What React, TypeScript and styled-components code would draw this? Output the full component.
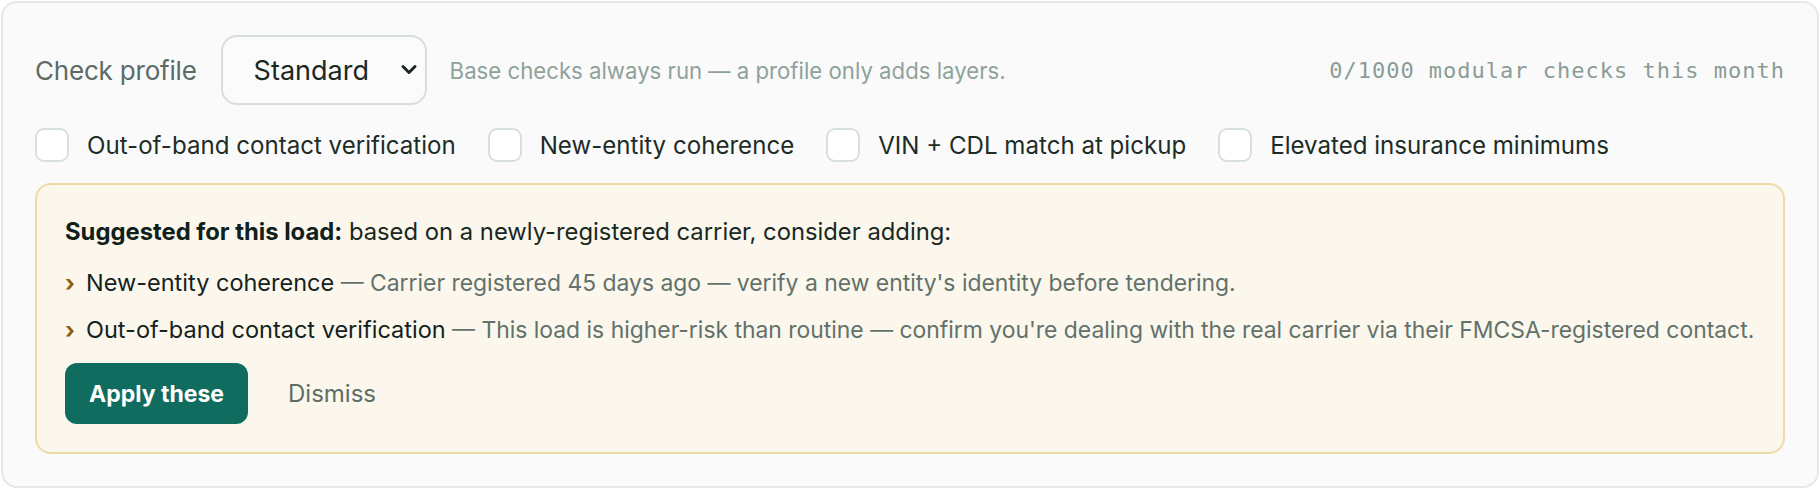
import { useState } from "react"
import styled, { createGlobalStyle } from "styled-components"

const GlobalStyle = createGlobalStyle`
  html, body {
    margin: 0;
    padding: 0;
    background: #ffffff;
  }
  body {
    padding: 1px;
    font-family: Inter, "Noto Sans", "Liberation Sans", sans-serif;
    color: #18261f;
  }
  * {
    box-sizing: border-box;
  }
`

const Card = styled.section`
  width: 1818px;
  padding: 32px;
  background: #fafafa;
  border: 2px solid #e4e8e6;
  border-radius: 16px;
`

const ProfileRow = styled.div`
  display: flex;
  align-items: center;
  height: 70px;
`

const FieldLabel = styled.span`
  font-size: 26px;
  letter-spacing: -0.2px;
  color: #5d6b66;
  margin-right: 24px;
`

const SelectWrap = styled.div`
  position: relative;
  width: 206px;
  height: 70px;
`

const Select = styled.select`
  appearance: none;
  width: 100%;
  height: 100%;
  padding: 0 40px 0 31px;
  font-family: inherit;
  font-size: 27px;
  color: #1a2823;
  background: #fbfbfb;
  border: 2px solid #d6dfdb;
  border-radius: 16px;
  outline: none;
`

const Chevron = styled.svg`
  position: absolute;
  right: 9px;
  top: 26px;
  pointer-events: none;
`

const Hint = styled.span`
  margin-left: 23px;
  font-size: 22.2px;
  color: #8fa29a;
`

const Usage = styled.span`
  margin-left: auto;
  font-family: "DejaVu Sans Mono", "Liberation Mono", monospace;
  font-size: 22px;
  letter-spacing: 1px;
  color: #8a9c95;
`

const CheckRow = styled.div`
  display: flex;
  align-items: center;
  gap: 32px;
  margin-top: 23px;
`

const CheckItem = styled.label`
  display: flex;
  align-items: center;
  gap: 18px;
  font-size: 24.1px;
  color: #1d2c27;
  cursor: pointer;
`

const Box = styled.input`
  appearance: none;
  margin: 0;
  width: 34px;
  height: 34px;
  background: #ffffff;
  border: 2px solid #d8e0dc;
  border-radius: 9px;
  cursor: pointer;

  &:checked {
    background: #0f6b5e;
    border-color: #0f6b5e;
  }
`

const Suggestion = styled.div`
  margin-top: 21px;
  padding: 31px 12px 28px 28px;
  background: #fbf7ec;
  border: 2px solid #eddba5;
  border-radius: 16px;
`

const Lead = styled.p`
  margin: 0;
  font-size: 23.8px;
  line-height: 32px;
  color: #1a2823;

  strong {
    font-weight: 700;
    color: #10201a;
  }
`

const Items = styled.ul`
  list-style: none;
  margin: 19px 0 0;
  padding: 0;
  display: flex;
  flex-direction: column;
  gap: 15px;
`

const Item = styled.li`
  display: flex;
  font-size: 22.9px;
  line-height: 32px;
  color: #62716b;
`

const Marker = styled.span`
  width: 21px;
  flex-shrink: 0;
  font-weight: 700;
  color: #8d5d10;
`

const ItemName = styled.span`
  font-size: 23.5px;
  color: #13221d;
`

const Actions = styled.div`
  display: flex;
  align-items: center;
  gap: 20px;
  margin-top: 17px;
`

const ApplyButton = styled.button`
  height: 61px;
  padding: 0 24px;
  font-family: inherit;
  font-size: 23px;
  font-weight: 700;
  color: #ffffff;
  background: #0f6c5f;
  border: none;
  border-radius: 12px;
  cursor: pointer;
`

const DismissButton = styled.button`
  height: 61px;
  padding: 0 20px;
  font-family: inherit;
  font-size: 24px;
  color: #5f6d68;
  background: transparent;
  border: none;
  cursor: pointer;
`

const checks = [
  "Out-of-band contact verification",
  "New-entity coherence",
  "VIN + CDL match at pickup",
  "Elevated insurance minimums",
]

const suggestions = [
  {
    name: "New-entity coherence",
    reason: "Carrier registered 45 days ago — verify a new entity's identity before tendering.",
  },
  {
    name: "Out-of-band contact verification",
    reason:
      "This load is higher-risk than routine — confirm you're dealing with the real carrier via their FMCSA-registered contact.",
  },
]

export default function App() {
  const [profile, setProfile] = useState("standard")
  const [selected, setSelected] = useState<string[]>([])
  const [showSuggestion, setShowSuggestion] = useState(true)

  const toggle = (name: string) => {
    setSelected(prev => (prev.includes(name) ? prev.filter(n => n !== name) : [...prev, name]))
  }

  const applySuggested = () => {
    setSelected(prev => Array.from(new Set([...prev, ...suggestions.map(s => s.name)])))
    setShowSuggestion(false)
  }

  return (
    <>
      <GlobalStyle />
      <Card>
        <ProfileRow>
          <FieldLabel>Check profile</FieldLabel>
          <SelectWrap>
            <Select value={profile} onChange={e => setProfile(e.target.value)}>
              <option value="standard">Standard</option>
              <option value="strict">Strict</option>
              <option value="custom">Custom</option>
            </Select>
            <Chevron width="18" height="18" viewBox="0 0 18 18" fill="none">
              <path d="M3 5.5l6 6 6-6" stroke="#1a2823" strokeWidth="3" strokeLinecap="round" strokeLinejoin="round" />
            </Chevron>
          </SelectWrap>
          <Hint>Base checks always run — a profile only adds layers.</Hint>
          <Usage>0/1000 modular checks this month</Usage>
        </ProfileRow>

        <CheckRow>
          {checks.map(name => (
            <CheckItem key={name}>
              <Box type="checkbox" checked={selected.includes(name)} onChange={() => toggle(name)} />
              {name}
            </CheckItem>
          ))}
        </CheckRow>

        {showSuggestion && (
          <Suggestion>
            <Lead>
              <strong>Suggested for this load:</strong> based on a newly-registered carrier, consider adding:
            </Lead>
            <Items>
              {suggestions.map(s => (
                <Item key={s.name}>
                  <Marker>›</Marker>
                  <span>
                    <ItemName>{s.name}</ItemName> — {s.reason}
                  </span>
                </Item>
              ))}
            </Items>
            <Actions>
              <ApplyButton onClick={applySuggested}>Apply these</ApplyButton>
              <DismissButton onClick={() => setShowSuggestion(false)}>Dismiss</DismissButton>
            </Actions>
          </Suggestion>
        )}
      </Card>
    </>
  )
}
